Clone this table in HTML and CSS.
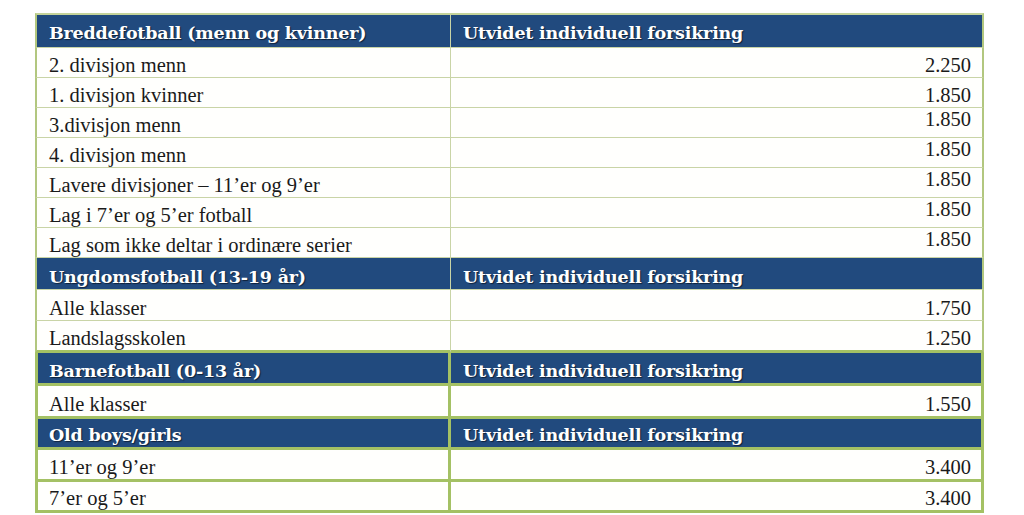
FILE: index.html
```html
<!DOCTYPE html>
<html lang="no">
<head>
<meta charset="utf-8">
<title>Forsikring</title>
<link rel="stylesheet" href="styles.css">
</head>
<body>
<table class="tbl">
  <colgroup><col class="c1"><col class="c2"></colgroup>
  <tr class="head first"><td>Breddefotball (menn og kvinner)</td><td>Utvidet individuell forsikring</td></tr>
  <tr class="row"><td>2. divisjon menn</td><td class="num">2.250</td></tr>
  <tr class="row"><td>1. divisjon kvinner</td><td class="num">1.850</td></tr>
  <tr class="row"><td>3.divisjon menn</td><td class="num hi">1.850</td></tr>
  <tr class="row"><td>4. divisjon menn</td><td class="num hi">1.850</td></tr>
  <tr class="row"><td>Lavere divisjoner – 11’er og 9’er</td><td class="num hi">1.850</td></tr>
  <tr class="row"><td>Lag i 7’er og 5’er fotball</td><td class="num hi">1.850</td></tr>
  <tr class="row"><td>Lag som ikke deltar i ordinære serier</td><td class="num hi">1.850</td></tr>
  <tr class="head h2"><td>Ungdomsfotball (13-19 år)</td><td>Utvidet individuell forsikring</td></tr>
  <tr class="row u1"><td>Alle klasser</td><td class="num">1.750</td></tr>
  <tr class="row before-thick"><td>Landslagsskolen</td><td class="num">1.250</td></tr>
  <tr class="head thick h3"><td>Barnefotball (0-13 år)</td><td>Utvidet individuell forsikring</td></tr>
  <tr class="row thick b1"><td>Alle klasser</td><td class="num">1.550</td></tr>
  <tr class="head thick h4"><td>Old boys/girls</td><td>Utvidet individuell forsikring</td></tr>
  <tr class="row thick o1"><td>11’er og 9’er</td><td class="num">3.400</td></tr>
  <tr class="row thick o2"><td>7’er og 5’er</td><td class="num">3.400</td></tr>
</table>
</body>
</html>
```

FILE: styles.css
```css
html, body {
  margin: 0;
  padding: 0;
  background: #ffffff;
}
body {
  padding: 13px 0 0 35px;
  font-family: "Liberation Serif", "Times New Roman", serif;
  color: #1a1a1a;
}
.tbl {
  border-collapse: separate;
  border-spacing: 0;
  width: 949px;
  table-layout: fixed;
  font-size: 20.5px;
}
.c1 { width: 416px; }
.c2 { width: 533px; }
.tbl td {
  padding: 0 12px 3px 12px;
  vertical-align: bottom;
  line-height: 18px;
  white-space: nowrap;
  border-right: 1px solid #c9d4a6;
  border-bottom: 1px solid #c9d4a6;
  background: #fffffd;
}
.tbl td:first-child {
  border-left: 2px solid #b2c77f;
  padding-left: 12px;
}
.tbl td:last-child {
  border-right: 2px solid #b2c77f;
  padding-right: 11px;
}
.row { height: 30px; }
.head td {
  padding-bottom: 3px;
  background: #214a7e;
  color: #ffffff;
  font-family: "DejaVu Serif", "Liberation Serif", serif;
  font-weight: bold;
  font-size: 17.5px;
  letter-spacing: -0.2px;
  text-shadow: 1px 1px 1px rgba(0, 0, 0, 0.55);
}
.first { height: 35px; }
.first td {
  border-top: 2px solid #c4d39a;
  padding-bottom: 5px;
}
.h2 { height: 32px; }
.u1 { height: 31px; }
.before-thick { height: 32px; }
.h3 { height: 33px; }
.b1 { height: 33px; }
.h4 { height: 31px; }
.o1 { height: 32px; }
.o2 { height: 31px; }
.num { text-align: right; }
.num.hi { padding-bottom: 9px; }
.before-thick td {
  border-bottom: 3px solid #a4c164;
}
.thick td {
  border-right: 3px solid #a4c164;
  border-bottom: 3px solid #a4c164;
}
.thick td:first-child { border-left: 3px solid #a4c164; padding-left: 11px; }
.thick td:last-child { border-right: 3px solid #a4c164; padding-right: 10px; }
```
